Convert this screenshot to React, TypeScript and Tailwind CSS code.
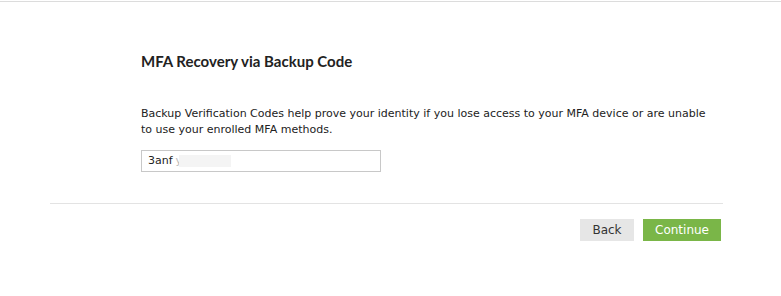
export default function App() {
  return (
    <div className="h-[296px] w-[781px] bg-white" style={{ fontFamily: "'DejaVu Sans', Verdana, sans-serif" }}>
      <div className="h-px mt-px bg-[#dcdcdc]" />
      <div className="ml-[50px] mr-[58px] border-b border-[#e3e3e3] pl-[91px] pt-[49px] pb-[31px]">
        <h1 className="text-[15px] font-bold leading-5 text-[#222]" style={{ fontFamily: "Lato, sans-serif" }}>
          MFA Recovery via Backup Code
        </h1>
        <p className="mt-[35px] max-w-[570px] text-[11px] leading-4 text-[#222]">
          Backup Verification Codes help prove your identity if you lose access to your MFA device or are unable
          to use your enrolled MFA methods.
        </p>
        <div className="mt-[12px] flex h-[22px] w-[240px] items-center border border-[#c8c8c8] pl-[6px] text-[11px] text-[#222]">
          <span>3anf</span>
          <span className="ml-[3px] text-[#bbb]">y</span>
          <span className="-ml-[3px] h-[12px] w-[52px] bg-[#f4f4f4]" />
        </div>
      </div>
      <div className="mr-[60px] mt-[15px] flex justify-end gap-[9px] text-[12px]">
        <button className="h-[22px] w-[54px] bg-[#e6e6e6] text-[#333]">Back</button>
        <button className="h-[22px] w-[78px] bg-[#7ab648] text-white">Continue</button>
      </div>
    </div>
  );
}
